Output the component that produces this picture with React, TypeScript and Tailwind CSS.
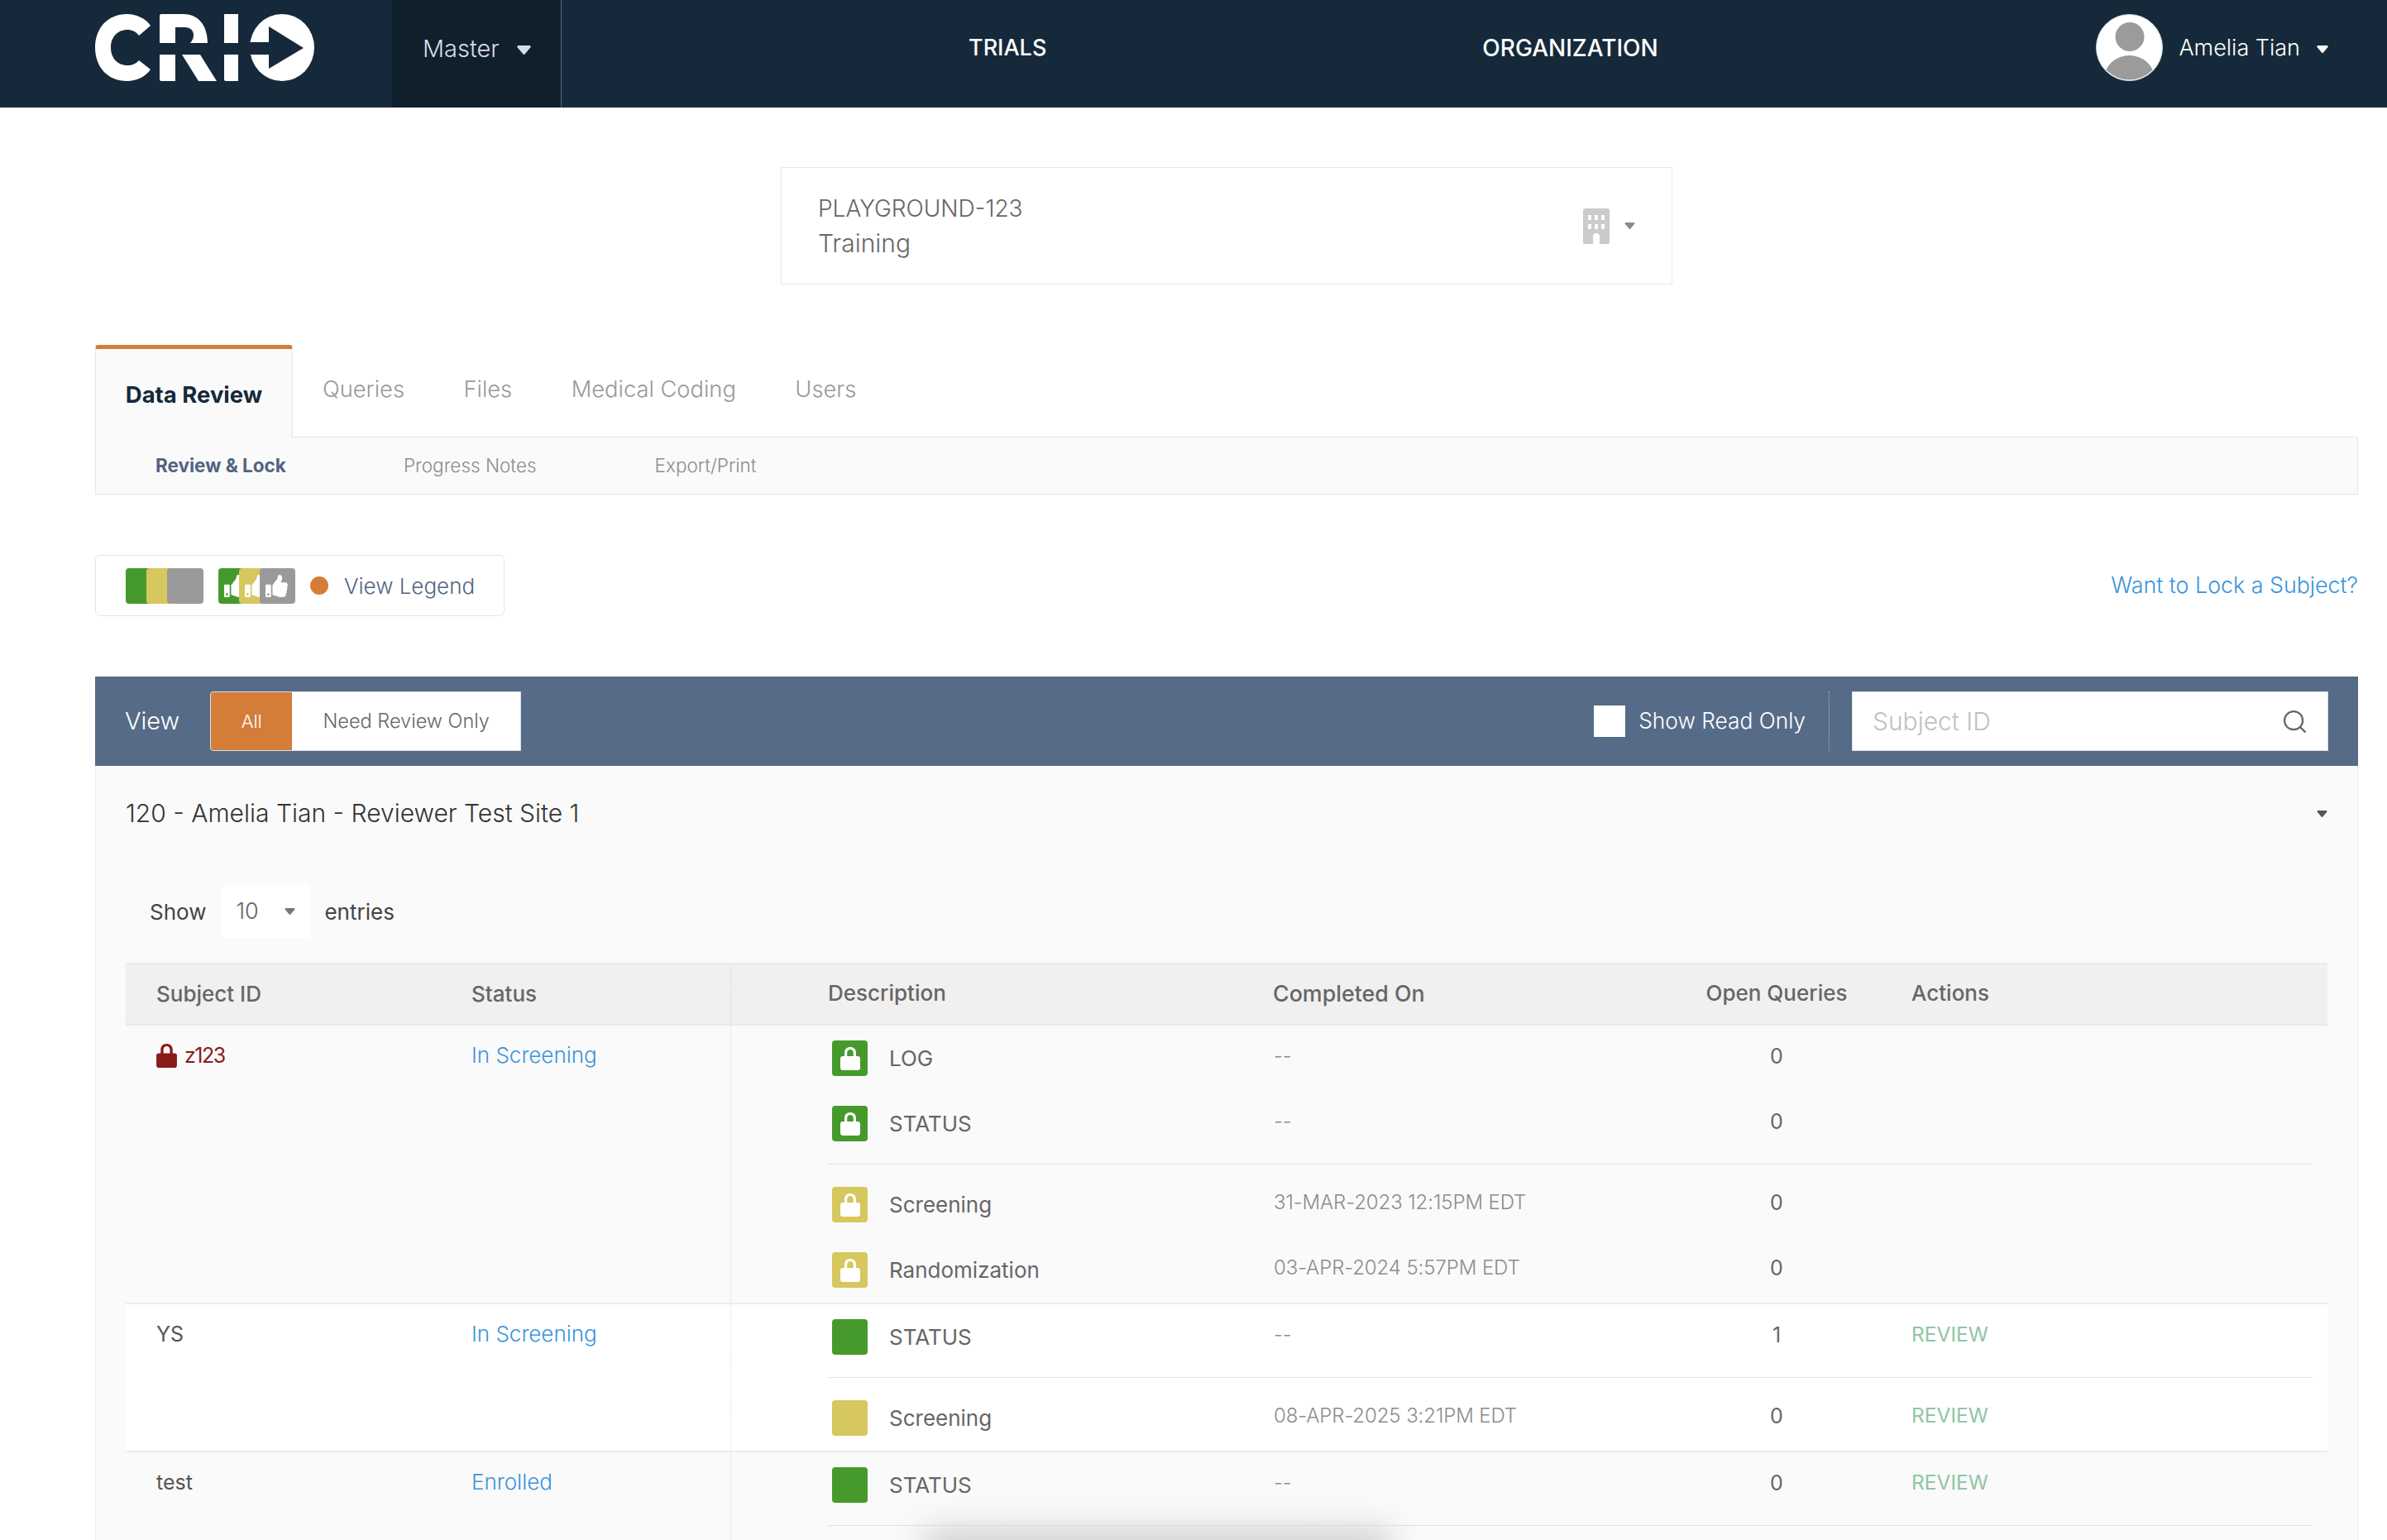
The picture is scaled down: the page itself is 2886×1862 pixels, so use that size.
import { FaThumbsUp } from 'react-icons/fa';
import { Search } from 'lucide-react';

const GREEN = 'bg-[#469a2c]';
const YELLOW = 'bg-[#d6c75e]';

const Caret = ({ className }: { className: string }) => (
  <svg viewBox="0 0 14 9" className={className} fill="currentColor">
    <path d="M1.5 0h11a1.2 1.2 0 0 1 1 1.9L8 8.4a1.3 1.3 0 0 1-2 0L.5 1.9A1.2 1.2 0 0 1 1.5 0z" />
  </svg>
);

const Logo = () => (
  <svg viewBox="0 0 267 81" className="w-[267px] h-[81px]">
    <path fill="#fff" d="M68 14C62 5 50 0 40 0 15 0 1 18 1 40.5 1 63 15 81 40 81c10 0 22-5 28-14L54 56c-4 4-8 6-14 6-12 0-20-9-20-21.500C20 28 28 19 40 19c6 0 10 2 14 7z" />
    <path fill="#fff" d="M79 2q0-2 2-2h27c18 0 29 14 29 35h-21c4-5 5-9 3-14-2-4-6-5-11-5H98v19H79z" />
    <path fill="#fff" d="M79 49h19v32H81q-2 0-2-2zM106 49h22l20 32h-22z" />
    <path fill="#fff" d="M157 0h17v35h-17zM157 49h17v32h-15q-2 0-2-2z" />
    <ellipse cx="227" cy="40.500" rx="39" ry="40.500" fill="#fff" />
    <path fill="#15293a" d="M211 15l42 26-42 25V49h-26V34h26z" />
  </svg>
);

const Avatar = () => (
  <svg viewBox="0 0 81 81" className="w-[81px] h-[81px]">
    <defs>
      <clipPath id="avatar-clip">
        <circle cx="40.500" cy="40.500" r="39" />
      </clipPath>
    </defs>
    <circle cx="40.500" cy="40.500" r="40" fill="#fff" stroke="#d5dde5" strokeWidth="1" />
    <circle cx="41" cy="27.500" r="17.500" fill="#9b9b9b" />
    <ellipse cx="40.500" cy="78" rx="30.500" ry="28" fill="#9b9b9b" clipPath="url(#avatar-clip)" />
  </svg>
);

const Building = () => (
  <svg viewBox="0 0 32 43" className="w-[32px] h-[43px]">
    <path
      fill="#cbcbcb"
      fillRule="evenodd"
      d="M3 0h26a3 3 0 0 1 3 3v38a2 2 0 0 1-2 2H20v-9a4 4 0 0 0-8 0v9H2a2 2 0 0 1-2-2V3a3 3 0 0 1 3-3zM6 8v6h4V8zm8 0v6h4V8zm8 0v6h4V8zM6 19v6h4v-6zm8 0v6h4v-6zm8 0v6h4v-6z"
    />
  </svg>
);

const Lock = ({ className, color }: { className: string; color: string }) => (
  <svg viewBox="0 0 24 28" className={className} fill={color}>
    <path d="M12 0c-4.500 0-7 3-7 7v5h3.200V7.200C8.200 4.800 9.700 3 12 3s3.800 1.800 3.800 4.200V12H19V7c0-4-2.500-7-7-7z" />
    <rect x="0" y="11" width="24" height="17" rx="3" />
  </svg>
);

const StatusBox = ({ color, locked }: { color: string; locked?: boolean }) => (
  <div className={`w-[43px] h-[43px] rounded-[4px] flex items-center justify-center shrink-0 ${color}`}>
    {locked && <Lock className="w-[24px] h-[28px]" color="#fff" />}
  </div>
);

type Item = { color: string; locked?: boolean; label: string; date: string; queries: string; review?: boolean };

const ItemRow = ({ item }: { item: Item }) => (
  <div className="grid grid-cols-[538px_523px_172px_1fr] h-[43px] items-center">
    <div className="flex items-center pl-[5px]">
      <StatusBox color={item.color} locked={item.locked} />
      <span className="ml-[26px] text-[26px] leading-[36px] text-[#666]">{item.label}</span>
    </div>
    <div className="pb-[6px] pl-[1px] text-[24px] tracking-[-0.1px] leading-[36px] text-[#8c8c8c] font-light">{item.date}</div>
    <div className="pb-[6px] text-center text-[25px] leading-[36px] text-[#666]">{item.queries}</div>
    <div className="pb-[7px] pl-[77px] text-[24.5px] leading-[36px] text-[#8fc6a4]">{item.review ? 'REVIEW' : ''}</div>
  </div>
);

const Group = ({ items, last, first }: { items: Item[]; last?: boolean; first?: boolean }) => (
  <div
    className={`flex flex-col gap-[36px] ${first ? 'pt-[18px]' : 'pt-[27px]'} ${
      last ? 'pb-[18px]' : 'pb-[27px] border-b border-dotted border-[#c9c9c9]'
    }`}
  >
    {items.map(item => (
      <ItemRow key={item.label} item={item} />
    ))}
  </div>
);

const SubjectRow = ({
  id,
  status,
  locked,
  groups,
  white,
}: {
  id: string;
  status: string;
  locked?: boolean;
  groups: Item[][];
  white?: boolean;
}) => (
  <div className={`flex border-b-2 border-[#ececec] ${white ? 'bg-white' : 'bg-[#fafafa]'}`}>
    <div className="w-[732px] shrink-0 grid grid-cols-[381px_1fr] content-start pl-[37px] pt-[18px] border-r border-dotted border-[#dcdcdc] text-[25px] leading-[36px]">
      <div className={`flex items-center h-[36px] ${locked ? 'text-[#8b1a1a] tracking-[-1.5px]' : 'text-[#555]'}`}>
        {locked && <Lock className="w-[25px] h-[29px] mr-[9px]" color="#8b1a1a" />}
        {id}
      </div>
      <div className="text-[26px] text-[#3a92dc] font-light">{status}</div>
    </div>
    <div className="flex-1 pl-[117px] pr-[18px]">
      {groups.map((g, i) => (
        <Group key={i} items={g} first={i === 0} last={i === groups.length - 1} />
      ))}
    </div>
  </div>
);

const TABS = ['Queries', 'Files', 'Medical Coding', 'Users'];

const ROWS = [
  {
    id: 'z123',
    status: 'In Screening',
    locked: true,
    groups: [
      [
        { color: GREEN, locked: true, label: 'LOG', date: '--', queries: '0' },
        { color: GREEN, locked: true, label: 'STATUS', date: '--', queries: '0' },
      ],
      [
        { color: YELLOW, locked: true, label: 'Screening', date: '31-MAR-2023 12:15PM EDT', queries: '0' },
        { color: YELLOW, locked: true, label: 'Randomization', date: '03-APR-2024 5:57PM EDT', queries: '0' },
      ],
    ],
  },
  {
    id: 'YS',
    status: 'In Screening',
    white: true,
    groups: [
      [{ color: GREEN, label: 'STATUS', date: '--', queries: '1', review: true }],
      [{ color: YELLOW, label: 'Screening', date: '08-APR-2025 3:21PM EDT', queries: '0', review: true }],
    ],
  },
  {
    id: 'test',
    status: 'Enrolled',
    groups: [[{ color: GREEN, label: 'STATUS', date: '--', queries: '0', review: true }], []],
  },
];

const App = () => {
  return (
    <div className="relative h-[1862px] overflow-hidden bg-white font-[Inter,sans-serif]">
      <header className="flex h-[130px] bg-[#15293a] text-white">
        <div className="w-[474px] shrink-0 pl-[114px] pt-[17px]">
          <Logo />
        </div>
        <div className="flex items-center w-[205px] shrink-0 bg-[#101f2c] border-r border-[#5a6a78] pl-[37px] pb-[12px] text-[#d5dde8] text-[29px] font-light">
          Master
          <Caret className="w-[19px] h-[11px] ml-[20px] mt-[2px]" />
        </div>
        <div className="flex items-center pb-[14px] ml-[492px] text-[27px] font-medium">TRIALS</div>
        <div className="flex items-center pb-[14px] ml-[527px] text-[28px] font-medium">ORGANIZATION</div>
        <div className="flex items-start ml-auto pr-[71px] pt-[17px]">
          <Avatar />
          <span className="ml-[19px] mt-[21px] text-[27px] font-light">Amelia Tian</span>
          <Caret className="w-[14px] h-[9px] ml-[20px] mt-[38px]" />
        </div>
      </header>

      <main className="ml-[115px] mr-[35px]">
        <div className="mx-auto mt-[72px] w-[1078px] h-[142px] border border-[#e8e8e8] flex items-center pl-[44px] pr-[44px]">
          <div className="flex-1 text-[28px] leading-[42px] text-[#666] font-light">
            <div>PLAYGROUND-123</div>
            <div className="text-[30px]">Training</div>
          </div>
          <Building />
          <Caret className="w-[13px] h-[8px] ml-[18px] text-[#8c8c8c]" />
        </div>

        <div className="mt-[73px] flex items-stretch h-[112px]">
          <div className="w-[239px] border-t-[5px] border-[#d47d38] rounded-t-[4px] bg-[#fafafa] border-r border-r-[#e6e6e6] border-l border-l-[#e6e6e6] flex items-center justify-center pt-[4px] text-[27.500px] font-bold text-[#15293a]">
            Data Review
          </div>
          <div className="flex-1 flex gap-[71.500px] pl-[36px] pt-[27px] border-b border-[#e6e6e6] text-[27.300px] leading-[54px] text-[#999] font-light">
            {TABS.map(t => (
              <span key={t}>{t}</span>
            ))}
          </div>
        </div>
        <div className="flex items-center h-[69px] bg-[#fafafa] border-b border-x border-[#e6e6e6] pl-[72px] text-[22.500px]">
          <span className="font-bold text-[#51647f]">Review &amp; Lock</span>
          <span className="ml-[142px] text-[#8c8c8c] font-light">Progress Notes</span>
          <span className="ml-[143px] text-[#8c8c8c] font-light">Export/Print</span>
        </div>

        <div className="mt-[73px] flex items-center justify-between">
          <div className="flex items-center w-[495px] h-[74px] pl-[36px] border border-[#e6e6e6] rounded-[6px]">
            <div className="flex">
              <div className={`w-[43px] h-[43px] rounded-[4px] ${GREEN}`} />
              <div className={`w-[43px] h-[43px] rounded-[4px] -ml-[18px] ${YELLOW}`} />
              <div className="w-[44px] h-[43px] rounded-[4px] -ml-[18px] bg-[#9a9a9a]" />
            </div>
            <div className="flex ml-[18px]">
              <div className={`flex items-center w-[43px] h-[43px] rounded-[4px] pl-[7px] text-white ${GREEN}`}>
                <FaThumbsUp size={27} />
              </div>
              <div className={`flex items-center w-[43px] h-[43px] rounded-[4px] pl-[7px] -ml-[18px] text-white ${YELLOW}`}>
                <FaThumbsUp size={27} />
              </div>
              <div className="flex items-center w-[43px] h-[43px] rounded-[4px] pl-[7px] -ml-[18px] text-white bg-[#9a9a9a]">
                <FaThumbsUp size={27} />
              </div>
            </div>
            <div className="w-[22px] h-[22px] rounded-full bg-[#d47d38] ml-[18px]" />
            <span className="ml-[19px] text-[26px] font-light text-[#51647f]">View Legend</span>
          </div>
          <a className="pb-[2px] text-[26.800px] text-[#3a92dc] font-light">Want to Lock a Subject?</a>
        </div>

        <div className="mt-[73px] flex items-center h-[108px] bg-[#566b87] pl-[36px] pr-[36px]">
          <span className="text-white text-[29px] font-light">View</span>
          <div className="flex h-[72px] ml-[37px] rounded-l-[4px] bg-white border border-[#d8dde4] overflow-hidden">
            <div className="w-[98px] bg-[#d47d38] text-white text-[22px] font-light flex items-center justify-center">All</div>
            <div className="w-[276px] text-[#666] text-[23.500px] font-light flex items-center justify-center">Need Review Only</div>
          </div>
          <div className="ml-auto w-[38px] h-[38px] bg-white" />
          <span className="ml-[16px] text-white text-[26.300px] font-light">Show Read Only</span>
          <div className="ml-[28px] h-[72px] border-l border-dotted border-[#aab4c2]" />
          <div className="ml-[27px] flex items-center justify-between w-[576px] h-[72px] bg-white border border-[#d8dde4] pl-[24px] pr-[23px]">
            <span className="text-[#c0c0c0] text-[30px] font-light">Subject ID</span>
            <Search className="w-[33px] h-[33px] text-[#666]" strokeWidth={1.6} />
          </div>
        </div>

        <div className="bg-[#fafafa] border-x border-[#ececec] px-[36px]">
          <div className="flex items-center justify-between h-[115px] text-[30px] text-[#333] font-light">
            120 - Amelia Tian - Reviewer Test Site 1
            <Caret className="w-[13px] h-[8px] text-[#555]" />
          </div>
          <div className="flex items-center h-[66px] mt-[28px] pl-[29px] text-[26px] text-[#444]">
            Show
            <div className="flex items-center ml-[18px] w-[109px] h-[66px] bg-white rounded-[6px] pl-[18px] pr-[19px] justify-between text-[#666] text-[27px] font-light">
              10
              <Caret className="w-[13px] h-[8px] text-[#777]" />
            </div>
            <span className="ml-[16px]">entries</span>
          </div>

          <div className="mt-[29px]">
            <div className="flex h-[76px] items-center bg-[#f0f0f0] border-b-2 border-t border-[#e9e9e9] text-[26px] font-medium text-[#666]">
              <div className="w-[732px] h-full shrink-0 grid grid-cols-[381px_1fr] items-center pl-[37px] border-r border-dotted border-[#dcdcdc]">
                <span>Subject ID</span>
                <span>Status</span>
              </div>
              <div className="flex-1 grid grid-cols-[538px_523px_172px_1fr] pl-[117px]">
                <span>Description</span>
                <span className="text-[26.800px]">Completed On</span>
                <span className="text-center">Open Queries</span>
                <span className="pl-[77px]">Actions</span>
              </div>
            </div>
            {ROWS.map(r => (
              <SubjectRow key={r.id} {...r} />
            ))}
          </div>
        </div>
      </main>

      <div className="absolute left-[1120px] top-[1852px] w-[560px] h-[40px] bg-[#c8c8c8] blur-[20px]" />
    </div>
  );
};

export default App;
